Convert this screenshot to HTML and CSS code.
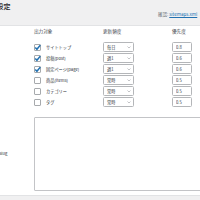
FILE: index.html
```html
<!DOCTYPE html>
<html lang="ja">
<head>
    <meta charset="UTF-8">
    <title>サイトマップ設定</title>
    <link rel="stylesheet" href="styles.css">
</head>
<body>
<div class="wrap">
    <div class="head">
        <div class="title"><h1>サイトマップ設定</h1></div>
        <p class="check">確認: <a href="#">sitemaps.xml</a></p>
    </div>

    <div class="panel">
        <div class="row">
            <div class="label"></div>
            <div class="field">
                <div class="grid">
                    <div class="th">出力対象</div>
                    <div class="th">更新頻度</div>
                    <div class="th">優先度</div>

                    <label class="opt"><span class="box"><svg viewBox="0 0 10 10"><path d="M1.8 5 4.2 7.6 9 1.6"/></svg></span>サイトトップ</label>
                    <div class="select"><span>毎日</span><svg viewBox="0 0 8 5"><path d="M1 1 4 4 7 1"/></svg></div>
                    <input class="num" type="text" value="0.8">

                    <label class="opt"><span class="box"><svg viewBox="0 0 10 10"><path d="M1.8 5 4.2 7.6 9 1.6"/></svg></span>投稿(post)</label>
                    <div class="select"><span>週1</span><svg viewBox="0 0 8 5"><path d="M1 1 4 4 7 1"/></svg></div>
                    <input class="num" type="text" value="0.6">

                    <label class="opt"><span class="box"><svg viewBox="0 0 10 10"><path d="M1.8 5 4.2 7.6 9 1.6"/></svg></span>固定ページ(page)</label>
                    <div class="select"><span>週1</span><svg viewBox="0 0 8 5"><path d="M1 1 4 4 7 1"/></svg></div>
                    <input class="num" type="text" value="0.6">

                    <label class="opt"><span class="box"></span>商品(items)</label>
                    <div class="select"><span>常時</span><svg viewBox="0 0 8 5"><path d="M1 1 4 4 7 1"/></svg></div>
                    <input class="num" type="text" value="0.5">

                    <label class="opt"><span class="box"></span>カテゴリー</label>
                    <div class="select"><span>常時</span><svg viewBox="0 0 8 5"><path d="M1 1 4 4 7 1"/></svg></div>
                    <input class="num" type="text" value="0.5">

                    <label class="opt"><span class="box"></span>タグ</label>
                    <div class="select"><span>常時</span><svg viewBox="0 0 8 5"><path d="M1 1 4 4 7 1"/></svg></div>
                    <input class="num" type="text" value="0.5">
                </div>
            </div>
        </div>

        <div class="row slug">
            <div class="label">除外slug</div>
            <div class="field">
                <textarea></textarea>
            </div>
        </div>
    </div>

    <div class="foot"></div>
</div>
</body>
</html>
```

FILE: styles.css
```css
/* General */
body {
    margin: 0;
    background: #f0f0f1;
    color: #2c3338;
    font-family: "Noto Sans CJK JP", "Noto Sans", sans-serif;
    overflow: hidden;
}

.wrap {
    margin-left: -40px;
    width: 260px;
}

/* Title bar */
.head {
    height: 25px;
    position: relative;
    border-bottom: 1px solid #e2e3e5;
}

.title {
    width: 50.5px;
    display: flex;
    justify-content: flex-end;
}

h1 {
    margin: 0;
    padding-top: 1px;
    font-size: 7px;
    font-weight: 500;
    line-height: 10px;
    white-space: nowrap;
    color: #1d2327;
}

.check {
    position: absolute;
    top: 11px;
    left: 198px;
    margin: 0;
    font-size: 4.5px;
    line-height: 7px;
    color: #646970;
    white-space: nowrap;
}

.check a {
    color: #2271b1;
}

/* Settings panel */
.panel {
    background: #fff;
    padding: 5px 0 4px;
    border-bottom: 1px solid #e2e3e5;
}

.row {
    display: flex;
}

.label {
    width: 74px;
    flex: none;
    font-size: 4.2px;
    display: flex;
    align-items: center;
    padding-left: 31px;
    box-sizing: border-box;
    margin-top: -3px;
}

.grid {
    display: grid;
    grid-template-columns: 69px 69px 21px;
    grid-auto-rows: 10px;
    row-gap: 1px;
    font-size: 4.2px;
    align-items: center;
}

.th {
    height: 10px;
    line-height: 6px;
    margin-bottom: 6px;
    font-size: 4.6px;
    color: #3c434a;
}

.opt {
    display: flex;
    align-items: center;
    gap: 5px;
}

.box {
    width: 5px;
    height: 5px;
    border: 0.6px solid #a7aaad;
    border-radius: 1px;
    background: #fff;
    display: flex;
    align-items: center;
    justify-content: center;
}

.box svg {
    width: 7px;
    height: 7px;
    flex: none;
    overflow: visible;
    fill: none;
    stroke: #2271b1;
    stroke-width: 2.2;
}

.select {
    width: 31px;
    height: 10px;
    box-sizing: border-box;
    border: 0.6px solid #b4b6b9;
    border-radius: 1.5px;
    display: flex;
    align-items: center;
    justify-content: space-between;
    padding: 0 2.5px 0 3px;
    color: #2c3338;
}

.select svg {
    width: 4px;
    height: 2.5px;
    fill: none;
    stroke: #787c82;
    stroke-width: 0.9;
}

.num {
    width: 20px;
    height: 10px;
    box-sizing: border-box;
    border: 0.6px solid #b4b6b9;
    border-radius: 1.5px;
    padding: 0 3px;
    margin: 0;
    font-family: inherit;
    font-size: 4.2px;
    color: #2c3338;
}

.slug {
    margin-top: 10px;
}

textarea {
    display: block;
    width: 200px;
    height: 74px;
    box-sizing: border-box;
    border: 0.8px solid #c3c4c7;
    border-radius: 1px;
    resize: none;
}

.foot {
    height: 20px;
}
```
